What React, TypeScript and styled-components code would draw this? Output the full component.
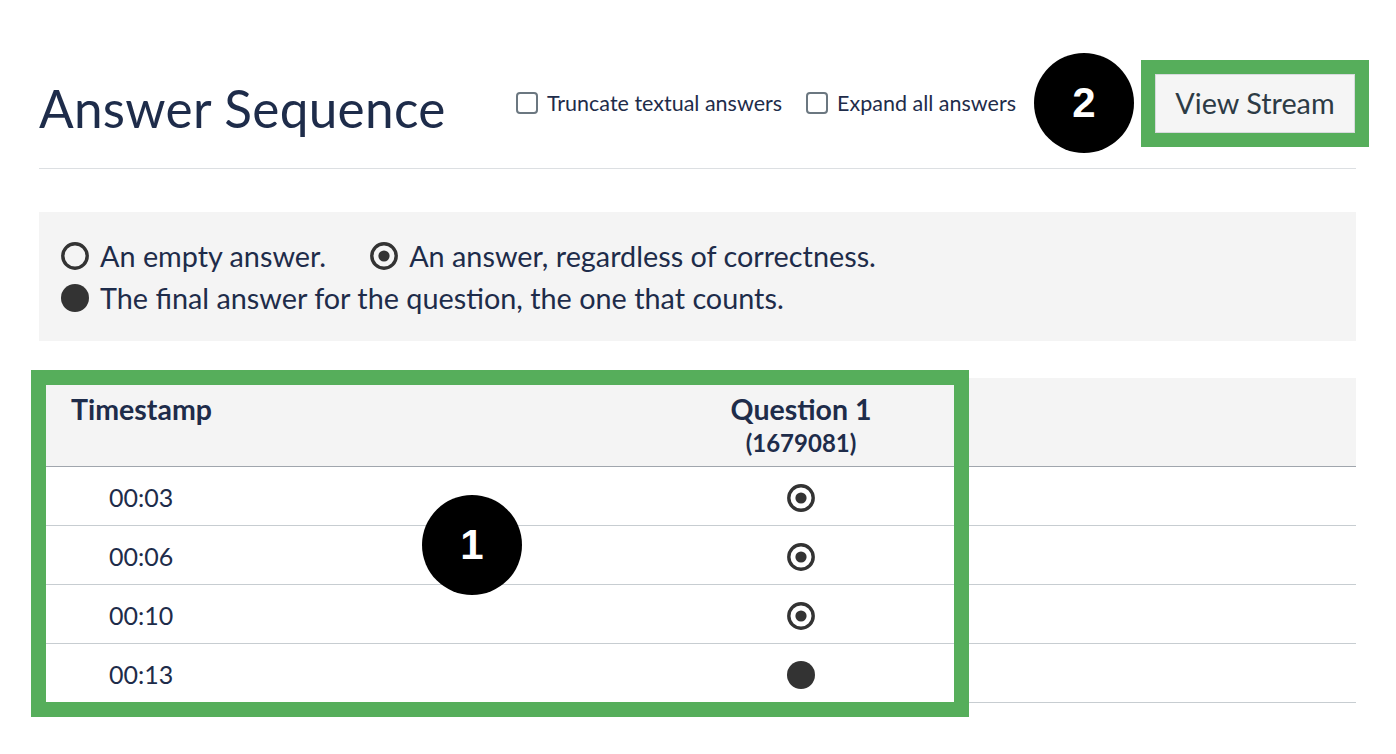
import React from 'react';
import styled, { createGlobalStyle } from 'styled-components';

const GlobalStyle = createGlobalStyle`
  body {
    margin: 0;
    background: #ffffff;
    font-family: Lato, "Open Sans", "Liberation Sans", sans-serif;
    color: #1e2c4a;
  }
`;

type Mark = 'empty' | 'answer' | 'final';

interface Attempt {
  time: string;
  mark: Mark;
}

const attempts: Attempt[] = [
  { time: '00:03', mark: 'answer' },
  { time: '00:06', mark: 'answer' },
  { time: '00:10', mark: 'answer' },
  { time: '00:13', mark: 'final' },
];

const MarkIcon = ({ mark }: { mark: Mark }) => (
  <svg width="28" height="28" viewBox="0 0 28 28" aria-hidden>
    {mark === 'final' ? (
      <circle cx="14" cy="14" r="14" fill="#333333" />
    ) : (
      <>
        <circle cx="14" cy="14" r="12.2" fill="none" stroke="#333333" strokeWidth="3.4" />
        {mark === 'answer' && <circle cx="14" cy="14" r="5.6" fill="#333333" />}
      </>
    )}
  </svg>
);

const App = () => {
  return (
    <>
      <GlobalStyle />
      <Page>
        <Header>
          <Title>Answer Sequence</Title>
          <Controls>
            <CheckLabel>
              <Box />
              Truncate textual answers
            </CheckLabel>
            <CheckLabel>
              <Box />
              Expand all answers
            </CheckLabel>
            <Callout size={100}>2</Callout>
            <StreamButton>View Stream</StreamButton>
          </Controls>
        </Header>

        <Legend>
          <LegendRow>
            <LegendItem>
              <MarkIcon mark="empty" />
              An empty answer.
            </LegendItem>
            <LegendItem>
              <MarkIcon mark="answer" />
              An answer, regardless of correctness.
            </LegendItem>
          </LegendRow>
          <LegendRow>
            <LegendItem>
              <MarkIcon mark="final" />
              The final answer for the question, the one that counts.
            </LegendItem>
          </LegendRow>
        </Legend>

        <TableWrap>
          <HeadRow>
            <HeadCell>Timestamp</HeadCell>
            <HeadCell align="center">
              Question 1
              <QuestionId>(1679081)</QuestionId>
            </HeadCell>
            <HeadCell />
          </HeadRow>
          {attempts.map((a) => (
            <Row key={a.time}>
              <TimeCell>{a.time}</TimeCell>
              <MarkCell>
                <MarkIcon mark={a.mark} />
              </MarkCell>
              <div />
            </Row>
          ))}
          <Highlight />
          <FloatingCallout>
            <Callout size={100}>1</Callout>
          </FloatingCallout>
        </TableWrap>
      </Page>
    </>
  );
};

const Page = styled.div`
  padding: 0 40px 40px 39px;
`;

const Header = styled.div`
  display: flex;
  align-items: center;
  justify-content: space-between;
  height: 130px;
  padding-top: 38px;
  border-bottom: 1px solid #dcdfe2;
`;

const Title = styled.h1`
  margin: 10px 0 0 0;
  font-size: 51.3px;
  font-weight: 400;
  letter-spacing: 0.3px;
  color: #1e2c4a;
`;

const Controls = styled.div`
  display: flex;
  align-items: center;
  padding-right: 1px;
`;

const CheckLabel = styled.label`
  display: flex;
  align-items: center;
  gap: 9px;
  font-size: 21.5px;
  color: #1e2c4a;
  margin-right: 24px;
  &:nth-child(2) {
    margin-right: 18px;
  }
`;

const Box = styled.span`
  display: inline-block;
  width: 18px;
  height: 18px;
  border: 2px solid #6b7780;
  border-radius: 4px;
  background: #ffffff;
`;

const Callout = styled.div<{ size: number }>`
  width: ${({ size }) => size}px;
  height: ${({ size }) => size}px;
  border-radius: 50%;
  background: #000000;
  color: #ffffff;
  display: flex;
  align-items: center;
  justify-content: center;
  font-family: "Liberation Sans", Arial, sans-serif;
  font-weight: 700;
  font-size: 42px;
`;

const StreamButton = styled.button`
  margin-left: 21px;
  width: 200px;
  height: 59px;
  background: #f5f5f5;
  border: 1px solid #d7dadd;
  outline: 14px solid #56ae5b;
  font-family: Lato, "Liberation Sans", sans-serif;
  font-size: 28.8px;
  color: #2d3b45;
  padding: 0;
`;

const Legend = styled.div`
  margin-top: 43px;
  background: #f4f4f4;
  padding: 30px 22px 29px;
  display: flex;
  flex-direction: column;
  gap: 14px;
`;

const LegendRow = styled.div`
  display: flex;
  gap: 44px;
`;

const LegendItem = styled.div`
  display: flex;
  align-items: center;
  gap: 11px;
  font-size: 28.8px;
  line-height: 28px;
  color: #1e2c4a;
`;

const TableWrap = styled.div`
  position: relative;
  margin-top: 37px;
`;

const columns = '607px 310px 1fr';

const HeadRow = styled.div`
  display: grid;
  grid-template-columns: ${columns};
  height: 88px;
  background: #f4f4f4;
  border-bottom: 1px solid #a0a6ad;
`;

const HeadCell = styled.div<{ align?: 'left' | 'center' }>`
  display: flex;
  flex-direction: column;
  align-items: ${({ align }) => (align === 'center' ? 'center' : 'flex-start')};
  padding: 14px 0 0 ${({ align }) => (align === 'center' ? 0 : 32)}px;
  font-size: 28.5px;
  font-weight: 700;
  line-height: 34px;
  color: #1e2c4a;
`;

const QuestionId = styled.span`
  font-size: 24px;
  line-height: 34px;
`;

const Row = styled.div`
  display: grid;
  grid-template-columns: ${columns};
  height: 58px;
  border-bottom: 1px solid #c7cdd1;
  align-items: center;
`;

const TimeCell = styled.div`
  padding-left: 70px;
  padding-top: 2px;
  font-size: 25px;
  color: #1e2c4a;
`;

const MarkCell = styled.div`
  display: flex;
  justify-content: center;
  padding-top: 4px;
`;

const Highlight = styled.div`
  position: absolute;
  left: -8px;
  top: -8px;
  width: 938px;
  height: 347px;
  box-sizing: border-box;
  border: 15px solid #56ae5b;
  pointer-events: none;
`;

const FloatingCallout = styled.div`
  position: absolute;
  left: 383px;
  top: 117px;
`;

export default App;
